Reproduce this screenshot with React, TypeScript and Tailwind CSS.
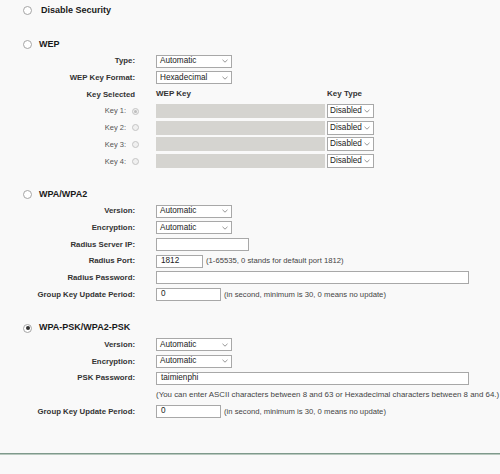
import type { ReactNode } from "react"

function Chevron() {
  return (
    <svg className="absolute right-[3px] top-1/2 -translate-y-1/2" width="6" height="4" viewBox="0 0 6 4">
      <path d="M0.5 0.8 L3 3.2 L5.5 0.8" fill="none" stroke="#8a8a8a" strokeWidth="0.9" />
    </svg>
  )
}

function Select({ value, w = "w-[76px]" }: { value: string; w?: string }) {
  return (
    <div className={`relative flex h-[13px] items-center border border-[#a8a8a8] bg-white pl-[3px] text-[8.2px] text-[#222] ${w}`}>
      {value}
      <Chevron />
    </div>
  )
}

function Input({ w, value = "" }: { w: string; value?: string }) {
  return (
    <div className={`flex h-[13px] items-center border border-[#a8a8a8] bg-white pl-[4px] text-[8.2px] text-[#222] ${w}`}>
      {value}
    </div>
  )
}

function Radio({ checked = false, size = "h-[8px] w-[8px]" }: { checked?: boolean; size?: string }) {
  return (
    <span className={`flex items-center justify-center rounded-full border border-[#a5a5a5] bg-white ${size}`}>
      {checked && <span className="h-[4px] w-[4px] rounded-full bg-[#333]" />}
    </span>
  )
}

function Row({ label, children }: { label?: string; children?: ReactNode }) {
  return (
    <div className="flex h-[16.7px] items-center">
      <div className="w-[135px] text-right text-[7.8px] font-bold text-[#333]">{label}</div>
      <div className="ml-[21px] flex items-center">{children}</div>
    </div>
  )
}

function Header({ title, checked = false, indent = "ml-[7px]" }: { title: string; checked?: boolean; indent?: string }) {
  return (
    <div className="flex h-[16.7px] items-center pl-[23px]">
      <Radio checked={checked} size="h-[9px] w-[9px]" />
      <span className={`text-[9px] font-bold text-[#1a1a1a] ${indent}`}>{title}</span>
    </div>
  )
}

function Blank() {
  return <div className="h-[16.7px]" />
}

function Note({ children }: { children: ReactNode }) {
  return <span className="ml-[3px] whitespace-nowrap text-[7.7px] text-[#444]">{children}</span>
}

export default function App() {
  return (
    <div
      className="h-[474px] w-[500px] overflow-hidden bg-[#f9f9f9] pt-[2.6px]"
      style={{ fontFamily: '"Liberation Sans", Arial, sans-serif' }}
    >
      <Header title="Disable Security" indent="ml-[9px]" />
      <Blank />
      <Header title="WEP" />
      <Row label="Type:">
        <Select value="Automatic" />
      </Row>
      <Row label="WEP Key Format:">
        <Select value="Hexadecimal" />
      </Row>
      <div className="flex h-[16.7px] items-center text-[7.8px] font-bold text-[#333]">
        <div className="w-[135px] text-right">Key Selected</div>
        <div className="ml-[21px] w-[171px] text-[8px]">WEP Key</div>
        <div className="text-[8px]">Key Type</div>
      </div>
      {[1, 2, 3, 4].map((n) => (
        <div key={n} className="flex h-[16.7px] items-center">
          <div className="flex w-[139px] items-center justify-end">
            <span className="text-[7.5px] text-[#555]">Key {n}:</span>
            <span className="ml-[6px] flex h-[7px] w-[7px] items-center justify-center rounded-full border border-[#c4c4c4] bg-[#f0f0f0]">
              {n === 1 && <span className="h-[3px] w-[3px] rounded-full bg-[#bdbdbd]" />}
            </span>
          </div>
          <div className="ml-[17px] h-[14px] w-[169px] bg-[#d5d4d0]" />
          <div className="ml-[2px]">
            <div className="relative flex h-[14px] w-[47px] items-center border border-[#a8a8a8] bg-white pl-[2px] text-[8.2px] text-[#222]">
              Disabled
              <Chevron />
            </div>
          </div>
        </div>
      ))}
      <Blank />
      <Header title="WPA/WPA2" />
      <Row label="Version:">
        <Select value="Automatic" />
      </Row>
      <Row label="Encryption:">
        <Select value="Automatic" />
      </Row>
      <Row label="Radius Server IP:">
        <Input w="w-[93px]" />
      </Row>
      <Row label="Radius Port:">
        <Input w="w-[47px]" value="1812" />
        <Note>(1-65535, 0 stands for default port 1812)</Note>
      </Row>
      <Row label="Radius Password:">
        <Input w="w-[313px]" />
      </Row>
      <Row label="Group Key Update Period:">
        <Input w="w-[65px]" value="0" />
        <Note>(in second, minimum is 30, 0 means no update)</Note>
      </Row>
      <Blank />
      <Header title="WPA-PSK/WPA2-PSK" checked />
      <Row label="Version:">
        <Select value="Automatic" />
      </Row>
      <Row label="Encryption:">
        <Select value="Automatic" />
      </Row>
      <Row label="PSK Password:">
        <Input w="w-[313px]" value="taimienphi" />
      </Row>
      <Row>
        <span className="whitespace-nowrap text-[7.9px] text-[#444]">
          (You can enter ASCII characters between 8 and 63 or Hexadecimal characters between 8 and 64.)
        </span>
      </Row>
      <Row label="Group Key Update Period:">
        <Input w="w-[65px]" value="0" />
        <Note>(in second, minimum is 30, 0 means no update)</Note>
      </Row>
      <div className="h-[33px]" />
      <div className="h-[2px] w-full border-t border-[#7f9a8c] bg-[#b9c9bf]" />
    </div>
  )
}
